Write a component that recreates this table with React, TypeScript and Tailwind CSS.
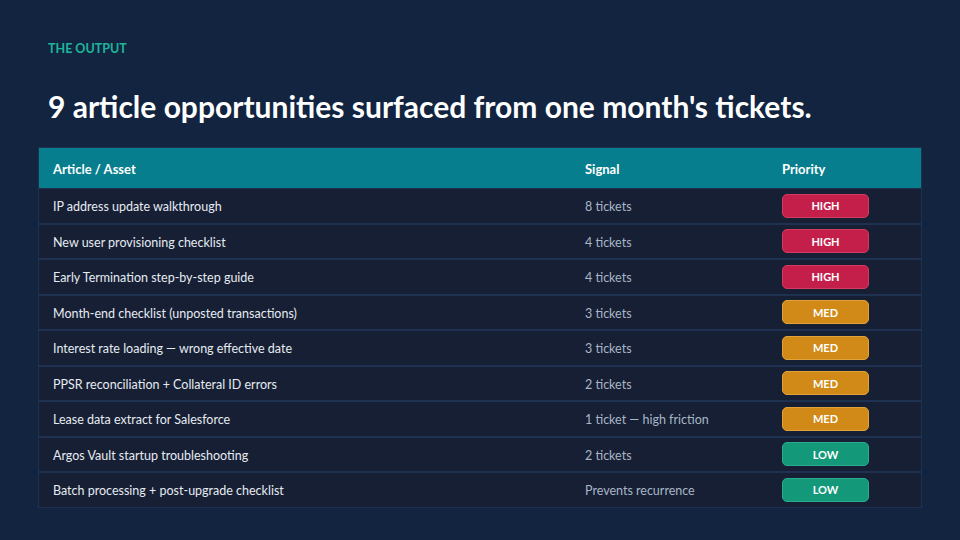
const rows = [
  { title: "IP address update walkthrough", signal: "8 tickets", priority: "HIGH" },
  { title: "New user provisioning checklist", signal: "4 tickets", priority: "HIGH" },
  { title: "Early Termination step-by-step guide", signal: "4 tickets", priority: "HIGH" },
  { title: "Month-end checklist (unposted transactions)", signal: "3 tickets", priority: "MED" },
  { title: "Interest rate loading — wrong effective date", signal: "3 tickets", priority: "MED" },
  { title: "PPSR reconciliation + Collateral ID errors", signal: "2 tickets", priority: "MED" },
  { title: "Lease data extract for Salesforce", signal: "1 ticket — high friction", priority: "MED" },
  { title: "Argos Vault startup troubleshooting", signal: "2 tickets", priority: "LOW" },
  { title: "Batch processing + post-upgrade checklist", signal: "Prevents recurrence", priority: "LOW" },
];

const badgeStyles: Record<string, string> = {
  HIGH: "bg-[#c41f4a] border-[#d23a60]",
  MED: "bg-[#d18a17] border-[#e2a23a]",
  LOW: "bg-[#13987a] border-[#2aab8c]",
};

const Badge = ({ level }: { level: string }) => (
  <div
    className={`w-[87px] h-[24px] rounded-[5px] border flex items-center justify-center pt-[1px] text-[11px] font-bold text-white ${badgeStyles[level]}`}
  >
    {level}
  </div>
);

export default function App() {
  return (
    <div
      className="w-[960px] h-[540px] bg-[#12243f] flex flex-col overflow-hidden"
      style={{ fontFamily: "Lato, 'Open Sans', sans-serif" }}
    >
      <div className="pl-[48px] pt-[41px]">
        <p className="text-[12.5px] font-bold text-[#1fb59b] leading-[16px]">THE OUTPUT</p>
        <h1 className="mt-[31px] text-[30px] font-bold text-white leading-[36px]">
          9 article opportunities surfaced from one month's tickets.
        </h1>
      </div>

      <div className="mt-[23px] ml-[38px] w-[884px] border border-[#1d3152] bg-[#1f3150] flex flex-col">
        <div className="h-[40px] pt-[3px] bg-[#067e8d] grid grid-cols-[531px_197px_1fr] items-center text-[13px] font-bold text-white">
          <div className="pl-[14px]">Article / Asset</div>
          <div className="pl-[15px]">Signal</div>
          <div className="pl-[15px]">Priority</div>
        </div>
        <div className="flex flex-col gap-[2px] pt-[1px]">
          {rows.map((r) => (
            <div
              key={r.title}
              className="h-[33.5px] bg-[#161f33] grid grid-cols-[531px_197px_1fr] items-center text-[12.5px]"
            >
              <div className="pl-[14px] pt-[4px] text-[#e6ebf2]">{r.title}</div>
              <div className="pl-[15px] pt-[4px] text-[#a9b6c8]">{r.signal}</div>
              <div className="pl-[15px]">
                <Badge level={r.priority} />
              </div>
            </div>
          ))}
        </div>
      </div>
    </div>
  );
}
